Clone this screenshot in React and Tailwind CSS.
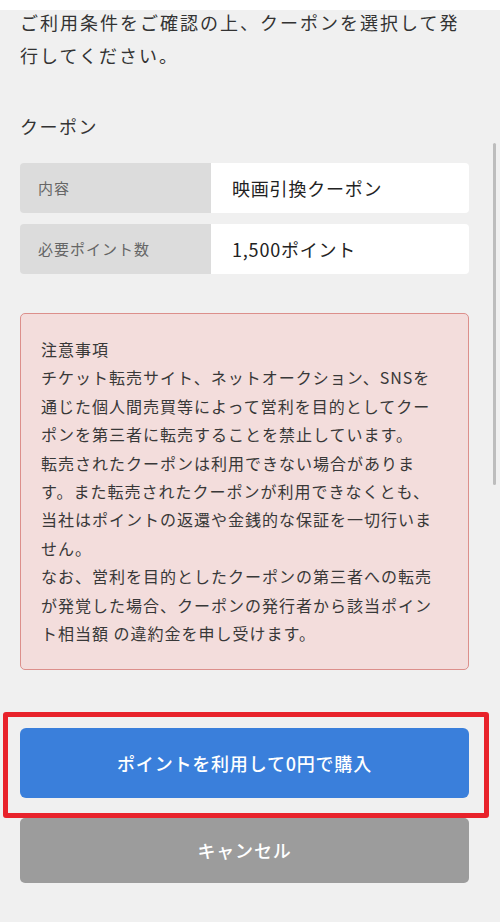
const font = { fontFamily: '"Noto Sans CJK JP", "Noto Sans", sans-serif' };

const noticeLines = [
  "注意事項",
  "チケット転売サイト、ネットオークション、SNSを",
  "通じた個人間売買等によって営利を目的としてクー",
  "ポンを第三者に転売することを禁止しています。",
  "転売されたクーポンは利用できない場合がありま",
  "す。また転売されたクーポンが利用できなくとも、",
  "当社はポイントの返還や金銭的な保証を一切行いま",
  "せん。",
  "なお、営利を目的としたクーポンの第三者への転売",
  "が発覚した場合、クーポンの発行者から該当ポイン",
  "ト相当額 の違約金を申し受けます。",
];

const rows = [
  { label: "内容", value: "映画引換クーポン" },
  { label: "必要ポイント数", value: "1,500ポイント" },
];

export default function App() {
  return (
    <div
      className="relative w-[500px] h-[922px] overflow-hidden bg-[#f0f0f0] text-[#333]"
      style={font}
    >
      {/* header edge */}
      <div className="absolute top-0 left-0 right-0 h-[10px] bg-white" />

      {/* scrollbar */}
      <div className="absolute left-[493px] top-[143px] w-[3px] h-[342px] rounded-full bg-[#bdbdbd]" />

      <div className="pl-[20px] pr-[31px] pt-[6px]">
        <p className="text-[18px] leading-[33px] tracking-[2px] text-[#333]">
          ご利用条件をご確認の上、クーポンを選択して発行してください。
        </p>

        <h2 className="mt-[40px] text-[18px] leading-[28px] tracking-[1.5px] text-[#333]">
          クーポン
        </h2>

        {/* coupon table */}
        <div className="mt-[23px] flex flex-col gap-[11px]">
          {rows.map((r) => (
            <div key={r.label} className="flex h-[50px] rounded-[4px] overflow-hidden">
              <div className="w-[191px] flex items-center pl-[18px] bg-[#dcdcdc] text-[15px] tracking-[1px] text-[#666]">
                {r.label}
              </div>
              <div className="flex-1 flex items-center pl-[21px] bg-white text-[18px] tracking-[0.8px] text-[#222]">
                {r.value}
              </div>
            </div>
          ))}
        </div>

        {/* notice */}
        <div className="mt-[39px] rounded-[5px] border border-[#dc8f8b] bg-[#f3dddc] px-[20px] pt-[21px] pb-[22px]">
          {noticeLines.map((line, i) => (
            <div
              key={i}
              className="whitespace-nowrap text-[16px] leading-[28.4px] tracking-[1px] text-[#383838]"
            >
              {line}
            </div>
          ))}
        </div>

        {/* purchase */}
        <div className="relative mt-[58px]">
          <button className="w-full h-[70px] rounded-[6px] bg-[#3a7fdb] text-white text-[18px] font-medium tracking-[0.8px]">
            ポイントを利用して0円で購入
          </button>
          <div className="absolute -top-[16px] -left-[17px] -right-[20px] -bottom-[20px] rounded-[3px] border-[5px] border-[#e8222b]" />
        </div>

        <button className="mt-[20px] w-full h-[65px] rounded-[5px] bg-[#9c9c9c] text-white text-[18px] font-medium tracking-[0.8px]">
          キャンセル
        </button>
      </div>
    </div>
  );
}
